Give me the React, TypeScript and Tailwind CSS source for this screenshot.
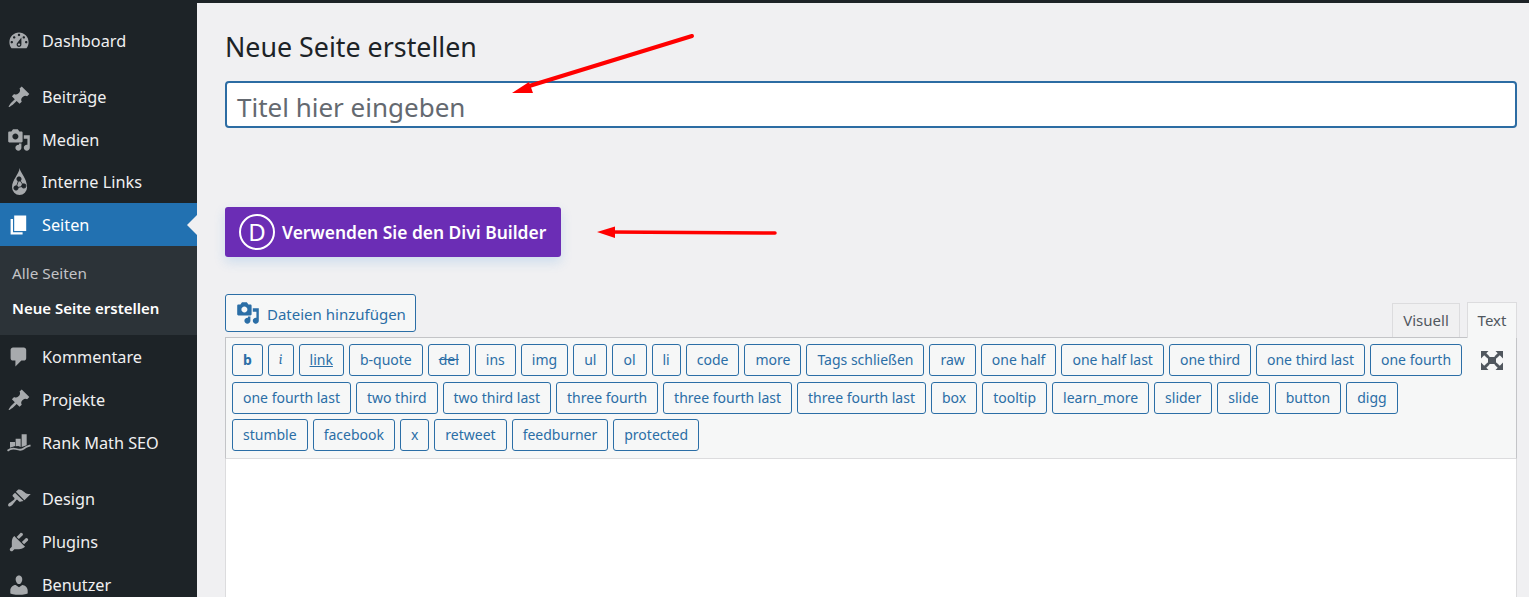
import React from "react";

const font = { fontFamily: '"Noto Sans", "Open Sans", sans-serif' };

const P: Record<string, string> = {
  dash: "M3.76 16h12.48c1.1-1.37 1.76-3.11 1.76-5 0-4.42-3.58-8-8-8s-8 3.58-8 8c0 1.89.66 3.63 1.76 5zM10 4c.55 0 1 .45 1 1s-.45 1-1 1-1-.45-1-1 .45-1 1-1zM6 6c.55 0 1 .45 1 1s-.45 1-1 1-1-.45-1-1 .45-1 1-1zm8 0c.55 0 1 .45 1 1s-.45 1-1 1-1-.45-1-1 .45-1 1-1zm-5.37 5.55L12 7v6c0 1.1-.9 2-2 2s-2-.9-2-2c0-.57.24-1.08.63-1.45zM4 10c.55 0 1 .45 1 1s-.45 1-1 1-1-.45-1-1 .45-1 1-1zm12 0c.55 0 1 .45 1 1s-.45 1-1 1-1-.45-1-1 .45-1 1-1zm-5 3c0-.55-.45-1-1-1s-1 .45-1 1 .45 1 1 1 1-.45 1-1z",
  pin: "M10.44 3.02l1.82-1.82 6.36 6.35-1.83 1.82c-1.05-.68-2.48-.57-3.41.36l-.75.75c-.92.93-1.04 2.35-.35 3.41l-1.83 1.82-2.41-2.41-2.8 2.79c-.42.42-3.38 2.71-3.8 2.29s1.86-3.39 2.28-3.81l2.79-2.79L4.1 9.36l1.83-1.82c1.05.69 2.48.57 3.41-.36l.75-.75c.93-.92 1.05-2.35.35-3.41z",
  media: "M13 11V4c0-.55-.45-1-1-1h-1.67L9 1H5L3.67 3H2c-.55 0-1 .45-1 1v7c0 .55.45 1 1 1h10c.55 0 1-.45 1-1zM7 4.5c1.38 0 2.5 1.12 2.5 2.5S8.38 9.5 7 9.5 4.5 8.38 4.5 7 5.62 4.5 7 4.5zM14 6h5v10.5c0 1.38-1.12 2.5-2.5 2.5S14 17.88 14 16.5s1.12-2.5 2.5-2.5c.17 0 .34.02.5.05V9h-3V6zm-4 8.05V13h2v3.5c0 1.38-1.12 2.5-2.5 2.5S7 17.88 7 16.5 8.12 14 9.5 14c.17 0 .34.02.5.05z",
  page: "M6 15V2h10v13H6zm-1 1h8v2H3V5h2v11z",
  comment: "M5 2h9c1.1 0 2 .9 2 2v7c0 1.1-.9 2-2 2h-2l-5 5v-5H5c-1.1 0-2-.9-2-2V4c0-1.1.9-2 2-2z",
  design: "M14.48 11.06L7.41 3.99l1.5-1.5c.5-.56 2.3-.47 3.51.32 1.21.8 1.43 1.28 2.91 2.1 1.18.64 2.45 1.26 4.45.85zm-.71.71L6.7 4.7 4.93 6.47c-.39.39-.39 1.02 0 1.41l1.06 1.06c.39.39.39 1.03 0 1.42-.6.6-1.43 1.11-2.21 1.69-.35.26-.7.53-1.01.84C1.43 13.23.4 14.8 1.12 15.87c1.08 1.08 2.64.05 3.98-1.65.31-.31.58-.66.84-1.01.58-.78 1.09-1.61 1.69-2.21.39-.39 1.03-.39 1.42 0l1.06 1.06c.39.39 1.02.39 1.41 0z",
  plugin: "M13.11 4.36L9.87 7.6 8 5.73l3.24-3.24c.35-.34 1.05-.2 1.56.32.52.51.66 1.21.31 1.55zm-8 1.77l.91-1.12 9.01 9.01-1.19.84c-.71.71-2.63 1.16-3.82 1.16H6.14L4.9 17.26c-.59.59-1.54.59-2.12 0-.59-.58-.59-1.53 0-2.12l1.24-1.24v-3.88c0-1.13.4-3.19 1.09-3.89zm7.26 3.97l3.24-3.24c.34-.35 1.04-.21 1.55.31.52.51.66 1.21.31 1.55l-3.24 3.25z",
  users: "M10 9.25c-2.27 0-2.73-3.44-2.73-3.44C7 4.02 7.82 2 9.97 2c2.16 0 2.98 2.02 2.71 3.81 0 0-.41 3.44-2.68 3.44zm0 2.57L12.72 10c2.39 0 4.52 2.33 4.52 4.53v2.49s-3.65 1.13-7.24 1.13c-3.65 0-7.24-1.13-7.24-1.13v-2.49c0-2.25 1.94-4.48 4.47-4.48z",
};

function Icon({ name, className }: { name: string; className: string }) {
  if (name === "drop") {
    return (
      <svg viewBox="0 0 20 20" className={`${className} overflow-visible`} fill="currentColor">
        <path d="M10.6-1.7C10.9 2.5 16.7 6.5 16.7 14.5a6.25 6.25 0 0 1-12.5 0C4.2 8 10 3.5 10.6-1.7z" />
        <g stroke="#1d2327" strokeWidth="0.7">
          <path d="M10 7.5L7.5 15L14 13.3L10 7.5" fill="none" />
          <circle cx="10" cy="7.5" r="1.8" fill="#1d2327" />
          <circle cx="7.5" cy="15" r="1.8" fill="#1d2327" />
          <circle cx="14" cy="13.3" r="1.8" fill="#1d2327" />
        </g>
      </svg>
    );
  }
  if (name === "rank") {
    return (
      <svg viewBox="0 0 20 20" className={className} fill="currentColor">
        <path d="M2.5 9.2h4.2v3.4l-4.2 1.4zM7.2 6.4h4.2v7l-2-.9-2.2.2zM12.2 2.8h4.2v9l-2.4 1-1.8.6z" />
        <path d="M0.4 16.4C3 14.4 5 14.2 7.5 15S12 16.4 14 14.6 17 12.8 19.6 12" fill="none" stroke="currentColor" strokeWidth="1.5" />
      </svg>
    );
  }
  return (
    <svg viewBox="0 0 20 20" className={className} fill="currentColor" fillRule="evenodd">
      <path d={P[name]} />
    </svg>
  );
}

function Item({ icon, label, active, h = "h-[43px]" }: { icon: string; label: string; active?: boolean; h?: string }) {
  return (
    <div className={`relative flex items-center ${h} ${active ? "bg-[#2271b1] text-white" : "text-[#f0f0f1]"}`}>
      <div className={`w-[42px] shrink-0 pl-[7px] ${active ? "text-white" : "text-[#a7aaad]"}`}>
        <Icon name={icon} className="w-6 h-6" />
      </div>
      <span className="text-[16.25px] leading-none whitespace-nowrap pt-[1px]">{label}</span>
      {active && (
        <span className="absolute right-0 top-1/2 -translate-y-1/2 w-0 h-0 border-y-[10px] border-y-transparent border-r-[10px] border-r-[#f0f0f2]" />
      )}
    </div>
  );
}

const rows: string[] = [
  "b", "i", "link", "b-quote", "del", "ins", "img", "ul", "ol", "li", "code", "more", "Tags schließen", "raw", "one half", "one half last", "one third", "one third last", "one fourth",
  "one fourth last", "two third", "two third last", "three fourth", "three fourth last", "three fourth last", "box", "tooltip", "learn_more", "slider", "slide", "button", "digg",
  "stumble", "facebook", "x", "retweet", "feedburner", "protected",
];

function QT({ label }: { label: string }) {
  const deco =
    label === "b" ? "font-bold" : label === "i" ? "italic font-serif" : label === "link" ? "underline" : label === "del" ? "line-through" : "";
  return (
    <button className={`h-[32px] px-[10px] border border-[#2b6ea6] rounded-[3px] bg-[#f6f7f7] text-[#2b6ea6] text-[14px] leading-none whitespace-nowrap ${deco}`}>
      {label}
    </button>
  );
}

export default function App() {
  return (
    <div style={font} className="relative w-[1529px] h-[597px] overflow-hidden bg-[#f0f0f2] flex flex-col">
      <div className="h-[3px] bg-[#1d2327] shrink-0" />
      <div className="flex flex-1 min-h-0">
        <aside className="w-[197px] shrink-0 bg-[#1d2327] pt-[16px]">
          <Item icon="dash" label="Dashboard" />
          <div className="h-[13px]" />
          <Item icon="pin" label="Beiträge" />
          <Item icon="media" label="Medien" />
          <Item icon="drop" label="Interne Links" h="h-[42px]" />
          <Item icon="page" label="Seiten" active />
          <div className="bg-[#2c3338] h-[89px] pl-[12px] flex flex-col pt-[9px]">
            <div className="h-[36px] flex items-center text-[15.3px] text-[#c3c4c7]">Alle Seiten</div>
            <div className="h-[35px] flex items-center text-[15px] font-semibold text-white whitespace-nowrap">Neue Seite erstellen</div>
          </div>
          <div className="h-px" />
          <Item icon="comment" label="Kommentare" h="h-[42px]" />
          <Item icon="pin" label="Projekte" />
          <Item icon="rank" label="Rank Math SEO" />
          <div className="h-[14px]" />
          <Item icon="design" label="Design" h="h-[42px]" />
          <Item icon="plugin" label="Plugins" />
          <Item icon="users" label="Benutzer" />
        </aside>
        <main className="flex-1 min-w-0 pl-[28px] pr-[12px]">
          <h1 className="text-[26.8px] leading-[36px] text-[#1d2327] mt-[26px] h-[36px] mb-[16px]">Neue Seite erstellen</h1>
          <div className="h-[47px] bg-white border-2 border-[#2c6ca3] rounded-[4px] flex items-center pl-[10px] text-[26px] text-[#646970] pt-[6px]">
            Titel hier eingeben
          </div>
          <button className="mt-[79px] h-[50px] w-[336px] bg-[#6b2db5] rounded-[3px] shadow-[0_5px_12px_rgba(43,135,218,0.18)] flex items-center pl-[14px] text-white">
            <span className="w-[36px] h-[36px] rounded-full border-2 border-white flex items-center justify-center text-[24px] leading-none shrink-0">D</span>
            <span className="ml-[7px] text-[17.4px] font-semibold whitespace-nowrap">Verwenden Sie den Divi Builder</span>
          </button>
          <div className="relative mt-[37px] h-[43px]">
            <button className="h-[38px] w-[191px] border border-[#2b6ea6] rounded-[3px] bg-[#f6f7f7] text-[#2b6ea6] flex items-center pl-[10px] text-[15px]">
              <Icon name="media" className="w-6 h-6" />
              <span className="ml-[7px] whitespace-nowrap pt-[3px]">Dateien hinzufügen</span>
            </button>
            <div className="absolute right-0 top-[8px] flex gap-[7px] items-end text-[15px] text-[#50575e]">
              <div className="h-[35px] w-[68px] border border-[#dcdcde] bg-[#f0f0f1] flex items-center justify-center">Visuell</div>
              <div className="h-[36px] w-[50px] border border-[#dcdcde] border-b-0 bg-[#f6f7f7] flex items-center justify-center relative z-10">Text</div>
            </div>
          </div>
          <div className="relative border border-[#c3c4c7] border-b-[#dcdcde] bg-[#f6f7f7] h-[122px] pl-[6px] pr-[46px] pt-[6px]">
            <div className="flex flex-wrap gap-x-[5px] gap-y-[5.5px]">
              {rows.map((r, i) => (
                <QT key={i} label={r} />
              ))}
            </div>
            <svg viewBox="0 0 22 19" className="absolute right-[13px] top-[13px] w-[22px] h-[19px] text-[#50575e]" fill="currentColor">
              <rect x="7" y="6" width="8" height="7" />
              <path d="M0 0h7.5L5.3 2.2 8.6 5.5 6.6 7.5 3.2 4.2 0 7.5z" />
              <path d="M22 0h-7.5l2.2 2.2-3.3 3.3 2 2 3.4-3.3L22 7.5z" />
              <path d="M0 19h7.5l-2.2-2.2 3.3-3.3-2-2-3.4 3.3L0 11.5z" />
              <path d="M22 19h-7.5l2.2-2.2-3.3-3.3 2-2 3.4 3.3 3.2-3.3z" />
            </svg>
          </div>
          <div className="h-[200px] bg-white border-x border-[#dcdcde]" />
        </main>
      </div>
      <svg className="absolute inset-0 pointer-events-none" width="1529" height="597" viewBox="0 0 1529 597" fill="none">
        <path d="M692 36 L526 87" stroke="#f00" strokeWidth="4" strokeLinecap="round" />
        <path d="M512 93 L529 82 L533 93 Z" fill="#f00" />
        <path d="M775 233 L610 232" stroke="#f00" strokeWidth="3.5" strokeLinecap="round" />
        <path d="M597 232 L615 226.5 L615 238 Z" fill="#f00" />
      </svg>
    </div>
  );
}
